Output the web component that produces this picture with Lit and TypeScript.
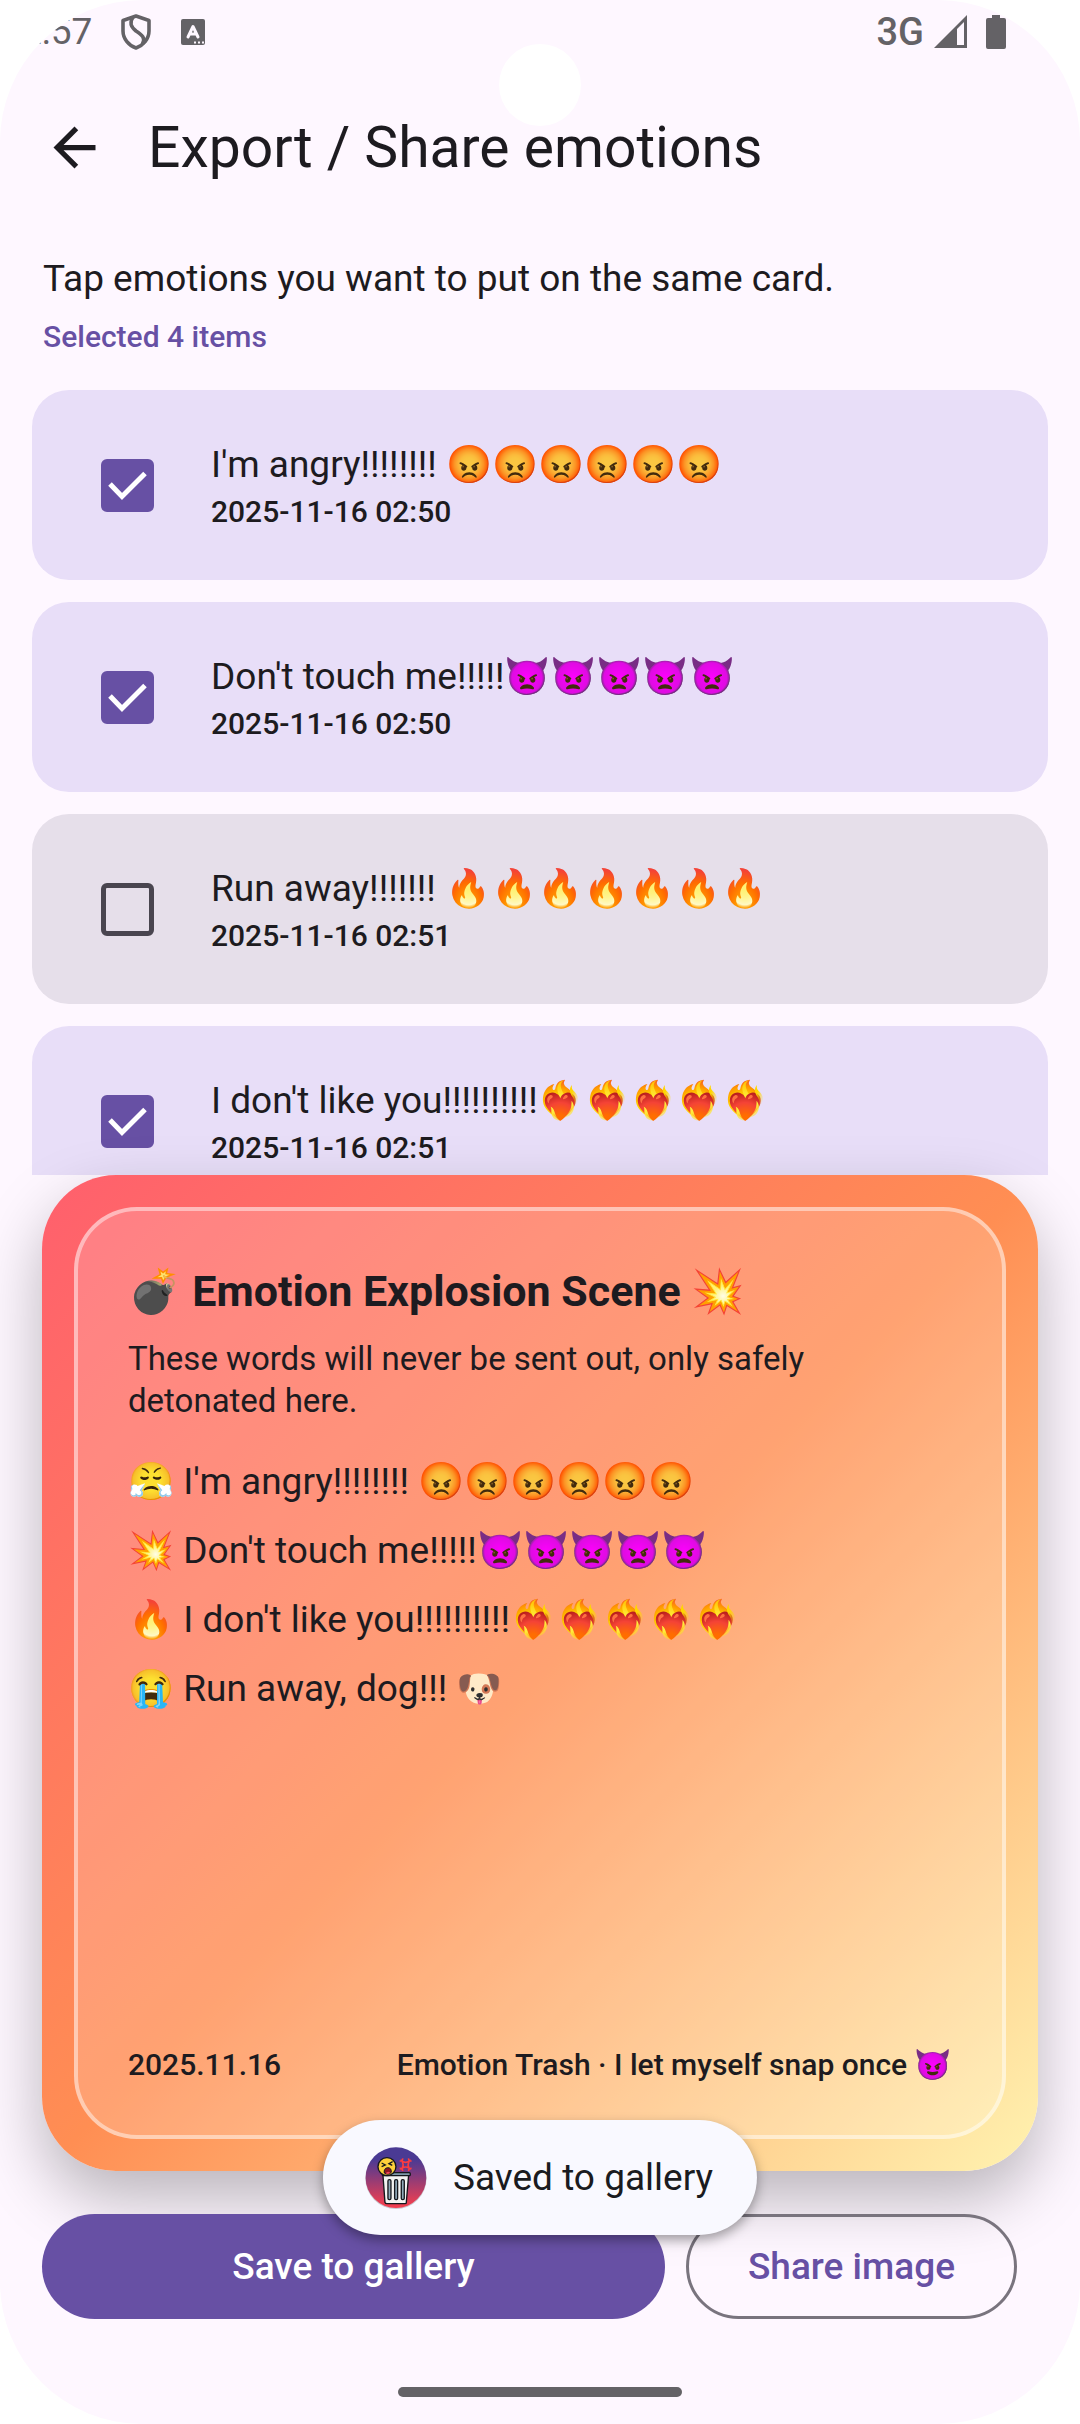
import { LitElement, html, css, svg } from "lit";
import { customElement, property, state } from "lit/decorators.js";
import { classMap } from "lit/directives/class-map.js";

interface Emotion {
  id: number;
  text: string;
  time: string;
  selected: boolean;
}

const BULLETS = ["😤", "💥", "🔥", "😭"];

/** Rows rendered at once in the picker. */
const VISIBLE_ROWS = 4;

@customElement("status-bar")
class StatusBar extends LitElement {
  static styles = css`
    :host {
      display: block;
      color: #646266;
      font-size: 37px;
      line-height: 64px;
    }
    .bar {
      display: flex;
      align-items: center;
      justify-content: space-between;
      height: 64px;
      padding: 0 73px 0 21px;
    }
    .group {
      display: flex;
      align-items: center;
    }
    .left {
      gap: 29px;
    }
    .right {
      gap: 10px;
    }
    .net {
      font-size: 38px;
      font-weight: 500;
    }
    svg {
      display: block;
    }
    .battery {
      margin-left: 8px;
    }
  `;

  render() {
    return html`
      <div class="bar">
        <div class="group left">
          <span>2:57</span>
          <svg width="30" height="36" viewBox="0 0 30 36" fill="none" stroke="currentColor" stroke-width="3.600">
            <path d="M15 2 28 6.500V17C28 25 22 31.500 15 34 8 31.500 2 25 2 17V6.500Z" stroke-linejoin="round" />
            <path d="M12 3C8 9 10 13 15 17 21 21 25 24 21.500 30" />
          </svg>
          <svg width="26" height="28" viewBox="0 0 26 28">
            <rect x="1" y="1" width="24" height="26" rx="2" fill="currentColor" />
            <path
              d="M8 19 13 8.500 18 19M10 16H16"
              fill="none"
              stroke="#fef7ff"
              stroke-width="3"
              stroke-linecap="round"
              stroke-linejoin="round"
            />
            <path d="M14 24.500h2M18 24.500h2M22 24.500h2" stroke="#fef7ff" stroke-width="2" />
          </svg>
        </div>
        <div class="group right">
          <span class="net">3G</span>
          <svg width="33" height="34" viewBox="0 0 33 34">
            <path d="M0 33 33 0V33Z" fill="currentColor" />
            <path d="M23 14 30 7V30H23Z" fill="#fef7ff" />
          </svg>
          <svg class="battery" width="22" height="36" viewBox="0 0 22 36">
            <path d="M7 1H15V4H19Q21 4 21 6V33Q21 35 19 35H3Q1 35 1 33V6Q1 4 3 4H7Z" fill="currentColor" />
          </svg>
        </div>
      </div>
    `;
  }
}

@customElement("emotion-row")
class EmotionRow extends LitElement {
  @property({ attribute: false }) emotion!: Emotion;

  static styles = css`
    :host {
      display: block;
      flex: none;
    }
    .row {
      display: flex;
      align-items: center;
      gap: 57px;
      height: 190px;
      box-sizing: border-box;
      padding: 0 69px;
      border-radius: 37px;
      background: #e6dfea;
      color: #1d1b20;
      cursor: pointer;
    }
    .row.selected {
      background: #e8def8;
    }
    .box {
      appearance: none;
      flex: none;
      width: 53px;
      height: 53px;
      box-sizing: border-box;
      margin: 0;
      border: 5px solid #49454f;
      border-radius: 6px;
    }
    .box:checked {
      border-color: #6750a4;
      background: #6750a4;
    }
    .check {
      display: grid;
      flex: none;
    }
    .check > * {
      grid-area: 1 / 1;
    }
    .mark {
      pointer-events: none;
    }
    .words {
      display: flex;
      flex-direction: column;
    }
    .text {
      font-size: 37px;
      line-height: 53px;
    }
    .time {
      font-size: 30px;
      line-height: 42px;
      font-weight: 500;
    }
  `;

  private toggle() {
    this.dispatchEvent(new CustomEvent("toggle-emotion", { detail: this.emotion.id, bubbles: true, composed: true }));
  }

  render() {
    const e = this.emotion;
    return html`
      <label class=${classMap({ row: true, selected: e.selected })}>
        <span class="check">
          <input class="box" type="checkbox" .checked=${e.selected} @change=${this.toggle} />
          ${e.selected
            ? html`<svg class="mark" width="53" height="53" viewBox="0 0 53 53" fill="none" stroke="#fff" stroke-width="5">
                <path d="M9 25 21 37.500 44 14.500" />
              </svg>`
            : null}
        </span>
        <span class="words">
          <span class="text">${e.text}</span>
          <time class="time">${e.time}</time>
        </span>
      </label>
    `;
  }
}

@customElement("emotion-card")
class EmotionCard extends LitElement {
  @property({ attribute: false }) lines: string[] = [];

  static styles = css`
    :host {
      display: block;
      flex: none;
    }
    .card {
      display: flex;
      aspect-ratio: 1;
      box-sizing: border-box;
      padding: 32px;
      border-radius: 74px;
      background: linear-gradient(135deg, #ff5f6d, #ff8e53 50%, #fff3b0);
      box-shadow: 0 28px 64px rgba(0, 0, 0, 0.27);
      color: #1d1b20;
    }
    .panel {
      flex: 1;
      display: flex;
      flex-direction: column;
      box-sizing: border-box;
      padding: 49px 50px;
      border: 4px solid rgba(255, 255, 255, 0.46);
      border-radius: 63px;
      background: rgba(255, 255, 255, 0.18);
    }
    .title {
      margin: 0;
      font-size: 43px;
      line-height: 63px;
      font-weight: 700;
    }
    .note {
      margin: 15px 0 33px;
      font-size: 33px;
      line-height: 42px;
    }
    .lines {
      display: flex;
      flex-direction: column;
      gap: 16px;
      margin: 0;
      padding: 0;
      list-style: none;
      font-size: 37px;
      line-height: 53px;
    }
    .foot {
      display: flex;
      justify-content: space-between;
      margin-top: auto;
      font-size: 30px;
      line-height: 42px;
      font-weight: 500;
    }
  `;

  render() {
    return html`
      <article class="card">
        <div class="panel">
          <h2 class="title">💣 Emotion Explosion Scene 💥</h2>
          <p class="note">These words will never be sent out, only safely<br />detonated here.</p>
          <ul class="lines">
            ${this.lines.map((line, i) => html`<li>${BULLETS[i % BULLETS.length]} ${line}</li>`)}
          </ul>
          <footer class="foot">
            <time>2025.11.16</time>
            <span>Emotion Trash · I let myself snap once 😈</span>
          </footer>
        </div>
      </article>
    `;
  }
}

@customElement("app-badge")
class AppBadge extends LitElement {
  static styles = css`
    :host {
      display: block;
      flex: none;
    }
    svg {
      display: block;
    }
  `;

  render() {
    const slot = (x: number) =>
      svg`<rect x=${x - 4} y="98" width="9" height="60" rx="4" fill="#8fa9b8" stroke="#15171c" stroke-width="4" />`;
    return html`
      <svg width="62" height="62" viewBox="0 0 186 186">
        <defs>
          <linearGradient id="sky" x1="0" y1="0" x2="0" y2="1">
            <stop offset="0.200" stop-color="#4a3a94" />
            <stop offset="0.950" stop-color="#f03e50" />
          </linearGradient>
        </defs>
        <circle cx="93" cy="94" r="92" fill="#c9c8d0" />
        <circle cx="93" cy="92" r="91" fill="url(#sky)" />
        <path d="M54 84H131L124 167Q124 170 120 170H66Q61 170 60 166Z" fill="#f4f4f2" stroke="#15171c" stroke-width="4" />
        ${[73, 93, 113].map(slot)}
        <rect x="52" y="77" width="84" height="9" rx="3" fill="#7e99a8" stroke="#15171c" stroke-width="4" />
        <circle cx="66" cy="59" r="27" fill="#ffd03a" stroke="#15171c" stroke-width="4" />
        <path d="M50 48 61 54 50 59M83 44 72 50 82 55" fill="none" stroke="#15171c" stroke-width="4" />
        <path d="M58 78Q56 64 68 62 80 62 79 76 70 86 58 78Z" fill="#8d1420" stroke="#15171c" stroke-width="3" />
        <path d="M62 79Q68 70 76 77 69 84 62 79Z" fill="#ee4657" />
        <path
          d="M104 42Q114 42 113 34M131 34Q130 42 140 42M104 64Q114 64 113 72M131 72Q130 64 140 64M112 43Q122 49 132 43Q127 53 132 63Q122 57 112 63Q117 53 112 43Z"
          fill="none"
          stroke="#ff3b3f"
          stroke-width="5"
        />
      </svg>
    `;
  }
}

@customElement("app-root")
class AppRoot extends LitElement {
  @state() private emotions: Emotion[] = [
    { id: 1, text: "I'm angry!!!!!!!! 😡😡😡😡😡😡", time: "2025-11-16 02:50", selected: true },
    { id: 2, text: "Don't touch me!!!!!👿👿👿👿👿", time: "2025-11-16 02:50", selected: true },
    { id: 3, text: "Run away!!!!!!! 🔥🔥🔥🔥🔥🔥🔥", time: "2025-11-16 02:51", selected: false },
    { id: 4, text: "I don't like you!!!!!!!!!!❤️‍🔥❤️‍🔥❤️‍🔥❤️‍🔥❤️‍🔥", time: "2025-11-16 02:51", selected: true },
    { id: 5, text: "Run away, dog!!! 🐶", time: "2025-11-16 02:51", selected: true },
  ];

  static styles = css`
    :host {
      display: block;
      background: #fff;
      font-family: Roboto, "Noto Color Emoji", sans-serif;
      color: #1d1b20;
    }
    .screen {
      position: relative;
      display: flex;
      flex-direction: column;
      height: 100vh;
      overflow: hidden;
      border-radius: 142px;
      background: #fef7ff;
    }
    .camera {
      position: absolute;
      top: 44px;
      left: 50%;
      width: 82px;
      height: 82px;
      margin-left: -41px;
      border-radius: 50%;
      background: #fff;
    }
    .header {
      flex: none;
      display: flex;
      align-items: center;
      gap: 11px;
      height: 167px;
      padding: 0 11px;
      position: relative;
    }
    .back {
      display: grid;
      place-items: center;
      width: 126px;
      height: 126px;
      padding: 0;
      border: 0;
      border-radius: 50%;
      background: none;
      color: inherit;
    }
    .title {
      margin: 0;
      font-size: 57px;
      line-height: 74px;
      font-weight: 400;
    }
    .intro {
      flex: none;
      display: flex;
      flex-direction: column;
      gap: 11px;
      padding: 21px 43px 32px;
    }
    .hint {
      margin: 0;
      font-size: 37px;
      line-height: 53px;
    }
    .count {
      margin: 0;
      font-size: 30px;
      line-height: 42px;
      font-weight: 500;
      color: #6750a4;
    }
    .list {
      flex: 1 1 0;
      min-height: 0;
      overflow-y: auto;
      scrollbar-width: none;
      display: flex;
      flex-direction: column;
      gap: 22px;
      padding: 0 32px;
    }
    .preview {
      flex: none;
      position: relative;
      padding: 0 42px;
    }
    .actions {
      position: relative;
      flex: none;
      display: flex;
      gap: 21px;
      padding: 43px 63px 68px 42px;
    }
    .btn {
      height: 105px;
      box-sizing: border-box;
      border-radius: 53px;
      padding: 0 59px;
      font: 500 37px/53px Roboto, sans-serif;
    }
    .save {
      flex: 1;
      border: 0;
      background: #6750a4;
      color: #fff;
    }
    .share {
      border: 3px solid #79747e;
      background: none;
      color: #6750a4;
    }
    .navbar {
      flex: none;
      align-self: center;
      width: 284px;
      height: 10px;
      margin-bottom: 27px;
      border-radius: 5px;
      background: #646266;
    }
    .toast {
      position: absolute;
      bottom: 189px;
      left: 50%;
      transform: translateX(-50%);
      display: flex;
      align-items: center;
      gap: 26px;
      height: 115px;
      box-sizing: border-box;
      padding: 0 44px 0 42px;
      border-radius: 58px;
      background: #f9f9ff;
      color: #1a1b20;
      box-shadow: 0 5px 12px rgba(0, 0, 0, 0.35);
      font-size: 37px;
      line-height: 53px;
      white-space: nowrap;
    }
  `;

  private onToggle(ev: CustomEvent<number>) {
    this.emotions = this.emotions.map((e) => (e.id === ev.detail ? { ...e, selected: !e.selected } : e));
  }

  render() {
    const chosen = this.emotions.filter((e) => e.selected);
    return html`
      <main class="screen">
        <div class="camera"></div>
        <status-bar></status-bar>
        <header class="header">
          <button class="back" aria-label="Back">
            <svg width="63" height="63" viewBox="0 0 24 24" fill="currentColor">
              <path d="M20 11H7.830l5.590-5.590L12 4l-8 8 8 8 1.410-1.410L7.830 13H20v-2z" />
            </svg>
          </button>
          <h1 class="title">Export / Share emotions</h1>
        </header>
        <section class="intro">
          <p class="hint">Tap emotions you want to put on the same card.</p>
          <p class="count">Selected ${chosen.length} items</p>
        </section>
        <section class="list" @toggle-emotion=${this.onToggle}>
          ${this.emotions.slice(0, VISIBLE_ROWS).map((e) => html`<emotion-row .emotion=${e}></emotion-row>`)}
        </section>
        <section class="preview">
          <emotion-card .lines=${chosen.map((e) => e.text)}></emotion-card>
        </section>
        <div class="actions">
          <button class="btn save">Save to gallery</button>
          <button class="btn share">Share image</button>
        </div>
        <div class="navbar"></div>
        <div class="toast" role="status">
          <app-badge></app-badge>
          <span>Saved to gallery</span>
        </div>
      </main>
    `;
  }
}
